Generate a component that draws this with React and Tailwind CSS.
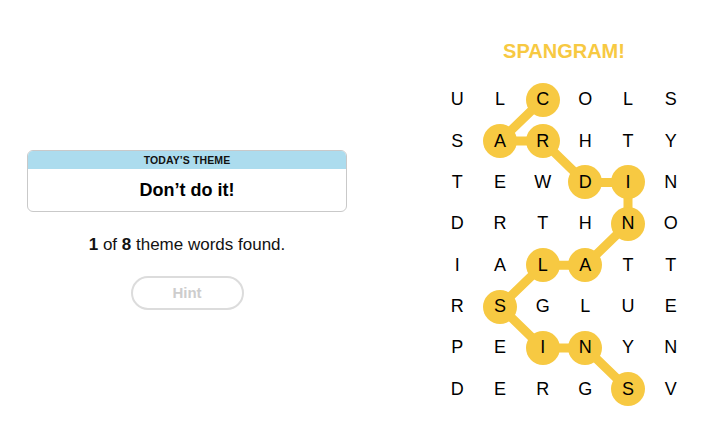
const letters = [
  'ULCOLS',
  'SARHTY',
  'TEWDIN',
  'DRTHNO',
  'IALATT',
  'RSGLUE',
  'PEINYN',
  'DERGSV',
];

const spangram = [
  [0, 2], [1, 1], [1, 2], [2, 3], [2, 4], [3, 4],
  [4, 3], [4, 2], [5, 1], [6, 2], [6, 3], [7, 4],
];

const CELL_W = 256 / 6;
const CELL_H = 331 / 8;
const YELLOW = '#f7c942';

function ThemeCard() {
  return (
    <div className="w-[320px] rounded-[6px] border border-[#c9c9c9] overflow-hidden bg-white">
      <div className="h-[18px] bg-[#acdcee] flex items-center justify-center text-[10.5px] font-bold tracking-[0.1px] text-[#121212] leading-none">
        TODAY’S THEME
      </div>
      <div className="h-[42px] flex items-center justify-center text-[18px] font-bold text-black">
        Don’t do it!
      </div>
    </div>
  );
}

function Board() {
  const isFound = (r, c) => spangram.some(([a, b]) => a === r && b === c);
  const pts = spangram
    .map(([r, c]) => `${(c + 0.5) * CELL_W},${(r + 0.5) * CELL_H}`)
    .join(' ');

  return (
    <div className="relative w-[256px] h-[331px]">
      <svg className="absolute inset-0" width="256" height="331">
        <polyline points={pts} fill="none" stroke={YELLOW} strokeWidth="9" strokeLinejoin="round" strokeLinecap="round" />
      </svg>
      <div className="relative grid grid-cols-6 grid-rows-8 w-full h-full">
        {letters.map((row, r) =>
          row.split('').map((ch, c) => (
            <div key={`${r}-${c}`} className="flex items-center justify-center">
              <div
                className={
                  'w-[34px] h-[34px] rounded-full flex items-center justify-center text-[18px] text-black ' +
                  (isFound(r, c) ? 'bg-[#f7c942]' : '')
                }
              >
                {ch}
              </div>
            </div>
          ))
        )}
      </div>
    </div>
  );
}

export default function App() {
  return (
    <div
      className="w-[709px] h-[428px] bg-white flex"
      style={{ fontFamily: '"Liberation Sans", Arial, sans-serif' }}
    >
      <div className="w-[374px] pt-[150px] flex flex-col items-center">
        <ThemeCard />
        <p className="mt-[21px] text-[17px] text-[#121212] leading-[24px]">
          <span className="font-bold">1</span> of <span className="font-bold">8</span> theme words found.
        </p>
        <button className="mt-[19px] w-[113px] h-[34px] rounded-full border-2 border-[#dcdcdc] text-[15px] font-bold text-[#cdcdcd] bg-white">
          Hint
        </button>
      </div>
      <div className="ml-[62px] pt-[39px] flex flex-col items-center">
        <div className="h-[24px] leading-[24px] text-[20px] font-bold text-[#f7c942]">SPANGRAM!</div>
        <div className="mt-[16px]">
          <Board />
        </div>
      </div>
    </div>
  );
}
